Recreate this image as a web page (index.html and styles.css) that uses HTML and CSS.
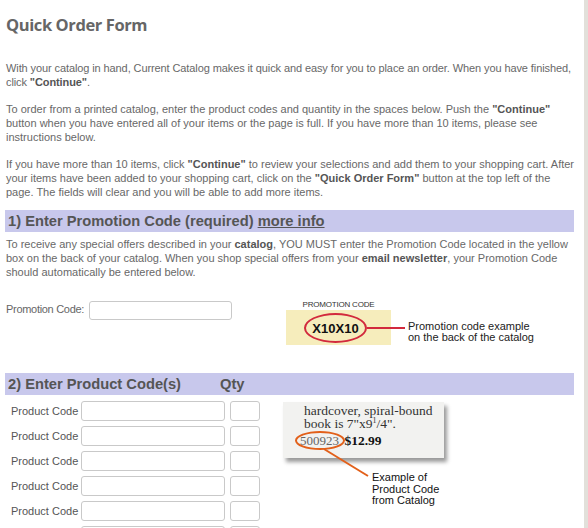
FILE: index.html
```html
<!DOCTYPE html>
<html>
<head>
<meta charset="utf-8">
<link rel="stylesheet" href="styles.css">
</head>
<body>
<div class="frame">
  <div class="page">
    <h1 class="title">Quick Order Form</h1>
    <p class="para para-first">With your catalog in hand, Current Catalog makes it quick and easy for you to place an order. When you have finished, click <b>"Continue"</b>.</p>
    <p class="para">To order from a printed catalog, enter the product codes and quantity in the spaces below. Push the <b>"Continue"</b> button when you have entered all of your items or the page is full. If you have more than 10 items, please see instructions below.</p>
    <p class="para">If you have more than 10 items, click <b>"Continue"</b> to review your selections and add them to your shopping cart. After your items have been added to your shopping cart, click on the <b>"Quick Order Form"</b> button at the top left of the page. The fields will clear and you will be able to add more items.</p>

    <div class="bar bar-one">1) Enter Promotion Code (required) <a class="more" href="#">more info</a></div>
    <p class="para intro">To receive any special offers described in your <b>catalog</b>, YOU MUST enter the Promotion Code located in the yellow box on the back of your catalog. When you shop special offers from your <b>email newsletter</b>, your Promotion Code should automatically be entered below.</p>

    <div class="promo-row">
      <label class="promo-label">Promotion Code:</label>
      <input class="field promo-input" type="text">
      <div class="promo-fig">
        <div class="promo-caption">PROMOTION CODE</div>
        <div class="promo-line">
          <div class="promo-box"><span class="promo-code">X10X10</span></div>
          <span class="red-rule"></span>
          <div class="promo-note">Promotion code example<br>on the back of the catalog</div>
        </div>
      </div>
    </div>

    <div class="bar bar-two"><span class="bar-main">2) Enter Product Code(s)</span><span>Qty</span></div>

    <div class="products">
      <div class="rows">
        <div class="row"><span class="row-label">Product Code</span><input class="field code" type="text"><input class="field qty" type="text"></div>
        <div class="row"><span class="row-label">Product Code</span><input class="field code" type="text"><input class="field qty" type="text"></div>
        <div class="row"><span class="row-label">Product Code</span><input class="field code" type="text"><input class="field qty" type="text"></div>
        <div class="row"><span class="row-label">Product Code</span><input class="field code" type="text"><input class="field qty" type="text"></div>
        <div class="row"><span class="row-label">Product Code</span><input class="field code" type="text"><input class="field qty" type="text"></div>
        <div class="row"><span class="row-label">Product Code</span><input class="field code" type="text"><input class="field qty" type="text"></div>
      </div>
      <div class="cat-fig">
        <div class="cat-card">
          <div class="cat-line">hardcover, spiral-bound</div>
          <div class="cat-line">book is 7"x9<sup class="frac">1</sup>/4".</div>
          <div class="cat-line cat-price"><span class="cat-code">500923</span> <b>$12.99</b></div>
        </div>
        <span class="cat-ring"></span>
        <svg class="cat-pointer" width="50" height="32" viewBox="0 0 50 32"><line x1="2" y1="1" x2="46" y2="28" stroke="#e2601a" stroke-width="2"/></svg>
        <div class="cat-note">Example of<br>Product Code<br>from Catalog</div>
      </div>
    </div>
  </div>
</div>
</body>
</html>
```

FILE: styles.css
```css
html, body {
  margin: 0;
  padding: 0;
  overflow: hidden;
  background: #fff;
}

.frame {
  width: 584px;
  height: 528px;
  overflow: hidden;
  border-right: 4px solid #e2e0da;
  box-sizing: content-box;
}

.page {
  width: 572px;
  padding-left: 6px;
  font-family: "Liberation Sans", Arial, sans-serif;
  font-size: 11px;
  color: #686868;
}

.title {
  margin: 0;
  padding-top: 14px;
  font-family: "Open Sans", sans-serif;
  font-size: 16.5px;
  font-weight: 700;
  letter-spacing: -0.4px;
  line-height: 22px;
  color: #666;
}

.para {
  margin: 25px 0 0;
  line-height: 14px;
}

.para + .para {
  margin-top: 13px;
}

.para-first {
  letter-spacing: -0.1px;
}

.para b {
  color: #555;
}

.bar {
  margin: 12px 0 0 -1px;
  width: 569px;
  height: 22px;
  background: #c8c8ec;
  color: #555;
  font-weight: 700;
  font-size: 14.7px;
  line-height: 23px;
  padding-left: 3px;
  box-sizing: border-box;
  display: flex;
  white-space: nowrap;
}

.bar-one {
  margin-top: 11px;
}

.more {
  color: #555;
  text-decoration: underline;
  margin-left: 4px;
}

.intro {
  margin-top: 5px;
}

.promo-row {
  display: flex;
  align-items: flex-start;
  margin-top: 22px;
  height: 50px;
}

.promo-label {
  line-height: 14px;
  margin-top: 1px;
  width: 83px;
  white-space: nowrap;
  letter-spacing: -0.3px;
  color: #666;
}

.field {
  margin: 0;
  padding: 0;
  box-sizing: border-box;
  border: 1px solid #c9c9c9;
  border-radius: 3px;
  background: #fff;
  height: 20px;
}

.promo-input {
  width: 143px;
  height: 19px;
}

.promo-fig {
  margin-left: 54px;
  margin-top: -1px;
}

.promo-caption {
  width: 105px;
  text-align: center;
  font-size: 8px;
  line-height: 10px;
  color: #333;
  letter-spacing: -0.2px;
}

.promo-line {
  display: flex;
  align-items: center;
}

.promo-box {
  width: 105px;
  height: 35px;
  background: #f6edbc;
  display: flex;
  align-items: center;
  justify-content: center;
}

.promo-code {
  width: 59px;
  height: 26px;
  border: 2px solid #d22a3d;
  border-radius: 50%;
  margin-left: -6px;
  margin-top: 1px;
  display: flex;
  align-items: center;
  justify-content: center;
  font-weight: 700;
  font-size: 13px;
  color: #111;
}

.red-rule {
  margin-left: -24px;
  width: 38px;
  height: 2px;
  background: #d22a3d;
}

.promo-note {
  margin-left: 3px;
  margin-top: 9px;
  font-size: 11px;
  line-height: 11px;
  color: #222;
}

.bar-two {
  margin-top: 22px;
}

.bar-main {
  width: 212px;
}

.products {
  display: flex;
  margin-top: 6px;
}

.rows {
  display: flex;
  flex-direction: column;
  gap: 5px;
  padding-left: 5px;
}

.row {
  display: flex;
  align-items: center;
  height: 20px;
}

.row-label {
  width: 70px;
  white-space: nowrap;
  color: #555;
}

.code {
  width: 144px;
}

.qty {
  width: 30px;
  margin-left: 5px;
}

.cat-fig {
  position: relative;
  margin-left: 23px;
  width: 200px;
  height: 120px;
}

.cat-card {
  width: 161px;
  height: 56px;
  margin-top: 1px;
  background: #f2f2f0;
  box-shadow: 3px 4px 4px rgba(0, 0, 0, 0.4);
  padding-left: 21px;
  box-sizing: border-box;
  font-family: "Liberation Serif", "Times New Roman", serif;
  font-size: 13.5px;
  color: #333;
}

.cat-line {
  line-height: 13px;
}

.cat-line:first-child {
  padding-top: 2px;
}

.cat-price {
  margin-top: 3px;
  margin-left: -4px;
  line-height: 15px;
}

.cat-code {
  color: #666;
  font-size: 13px;
}

.frac {
  font-size: 8px;
  line-height: 0;
  vertical-align: 5px;
}

.cat-price b {
  color: #111;
  margin-left: 2px;
}

.cat-ring {
  position: absolute;
  left: 12px;
  top: 30px;
  width: 46px;
  height: 15px;
  border: 2px solid #e2601a;
  border-radius: 50%;
}

.cat-pointer {
  position: absolute;
  left: 39px;
  top: 47px;
}

.cat-note {
  position: absolute;
  left: 89px;
  top: 71px;
  font-size: 11px;
  line-height: 11.5px;
  color: #111;
}
```
